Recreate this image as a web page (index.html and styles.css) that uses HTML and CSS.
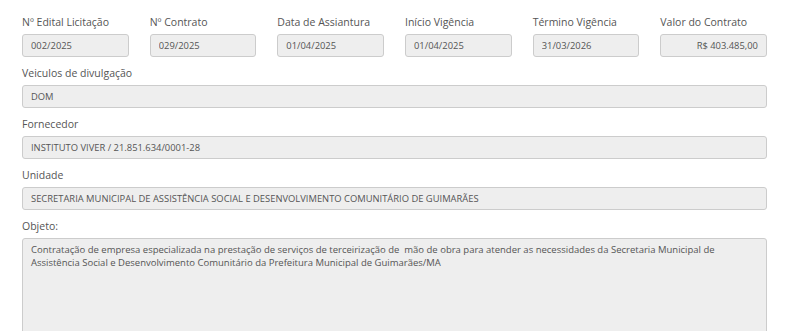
FILE: index.html
```html
<!DOCTYPE html>
<html lang="pt-BR">
<head>
  <meta charset="UTF-8">
  <title>Contrato 029/2025</title>
  <link rel="stylesheet" href="styles.css">
</head>
<body>
  <div class="form">
    <div class="row six">
      <div class="field">
        <label>Nº Edital Licitação</label>
        <input class="control" type="text" value="002/2025" readonly>
      </div>
      <div class="field">
        <label>Nº Contrato</label>
        <input class="control" type="text" value="029/2025" readonly>
      </div>
      <div class="field">
        <label>Data de Assiantura</label>
        <input class="control" type="text" value="01/04/2025" readonly>
      </div>
      <div class="field">
        <label>Início Vigência</label>
        <input class="control" type="text" value="01/04/2025" readonly>
      </div>
      <div class="field">
        <label>Término Vigência</label>
        <input class="control" type="text" value="31/03/2026" readonly>
      </div>
      <div class="field">
        <label>Valor do Contrato</label>
        <input class="control money" type="text" value="R$ 403.485,00" readonly>
      </div>
    </div>

    <div class="field">
      <label>Veiculos de divulgação</label>
      <input class="control" type="text" value="DOM" readonly>
    </div>

    <div class="field">
      <label>Fornecedor</label>
      <input class="control" type="text" value="INSTITUTO VIVER / 21.851.634/0001-28" readonly>
    </div>

    <div class="field">
      <label>Unidade</label>
      <input class="control" type="text" value="SECRETARIA MUNICIPAL DE ASSISTÊNCIA SOCIAL E DESENVOLVIMENTO COMUNITÁRIO DE GUIMARÃES" readonly>
    </div>

    <div class="field">
      <label>Objeto:</label>
      <textarea class="control area" readonly>Contratação de empresa especializada na prestação de serviços de terceirização de  mão de obra para atender as necessidades da Secretaria Municipal de Assistência Social e Desenvolvimento Comunitário da Prefeitura Municipal de Guimarães/MA</textarea>
    </div>
  </div>
</body>
</html>
```

FILE: styles.css
```css
body {
  margin: 0;
  background: #fff;
  font-family: "Open Sans", Arial, sans-serif;
  color: #555;
}
.form {
  width: 745px;
  padding: 14px 0 0 22px;
}
.row.six {
  display: grid;
  grid-template-columns: repeat(6, 1fr);
  column-gap: 21px;
}
.field {
  margin-bottom: 8px;
}
label {
  display: block;
  font-size: 10.5px;
  line-height: 16px;
  margin-bottom: 4px;
  color: #555;
}
.control {
  display: block;
  box-sizing: border-box;
  width: 100%;
  height: 23px;
  padding: 0 8px;
  margin: 0;
  border: 1px solid #ccc;
  border-radius: 3px;
  background: #eee;
  font-family: "Open Sans", Arial, sans-serif;
  font-size: 9.4px;
  color: #555;
  outline: none;
}
.money {
  text-align: right;
}
.area {
  height: 120px;
  padding: 4px 14px 4px 8px;
  font-size: 9.5px;
  line-height: 13px;
  resize: none;
  overflow: hidden;
}
```
